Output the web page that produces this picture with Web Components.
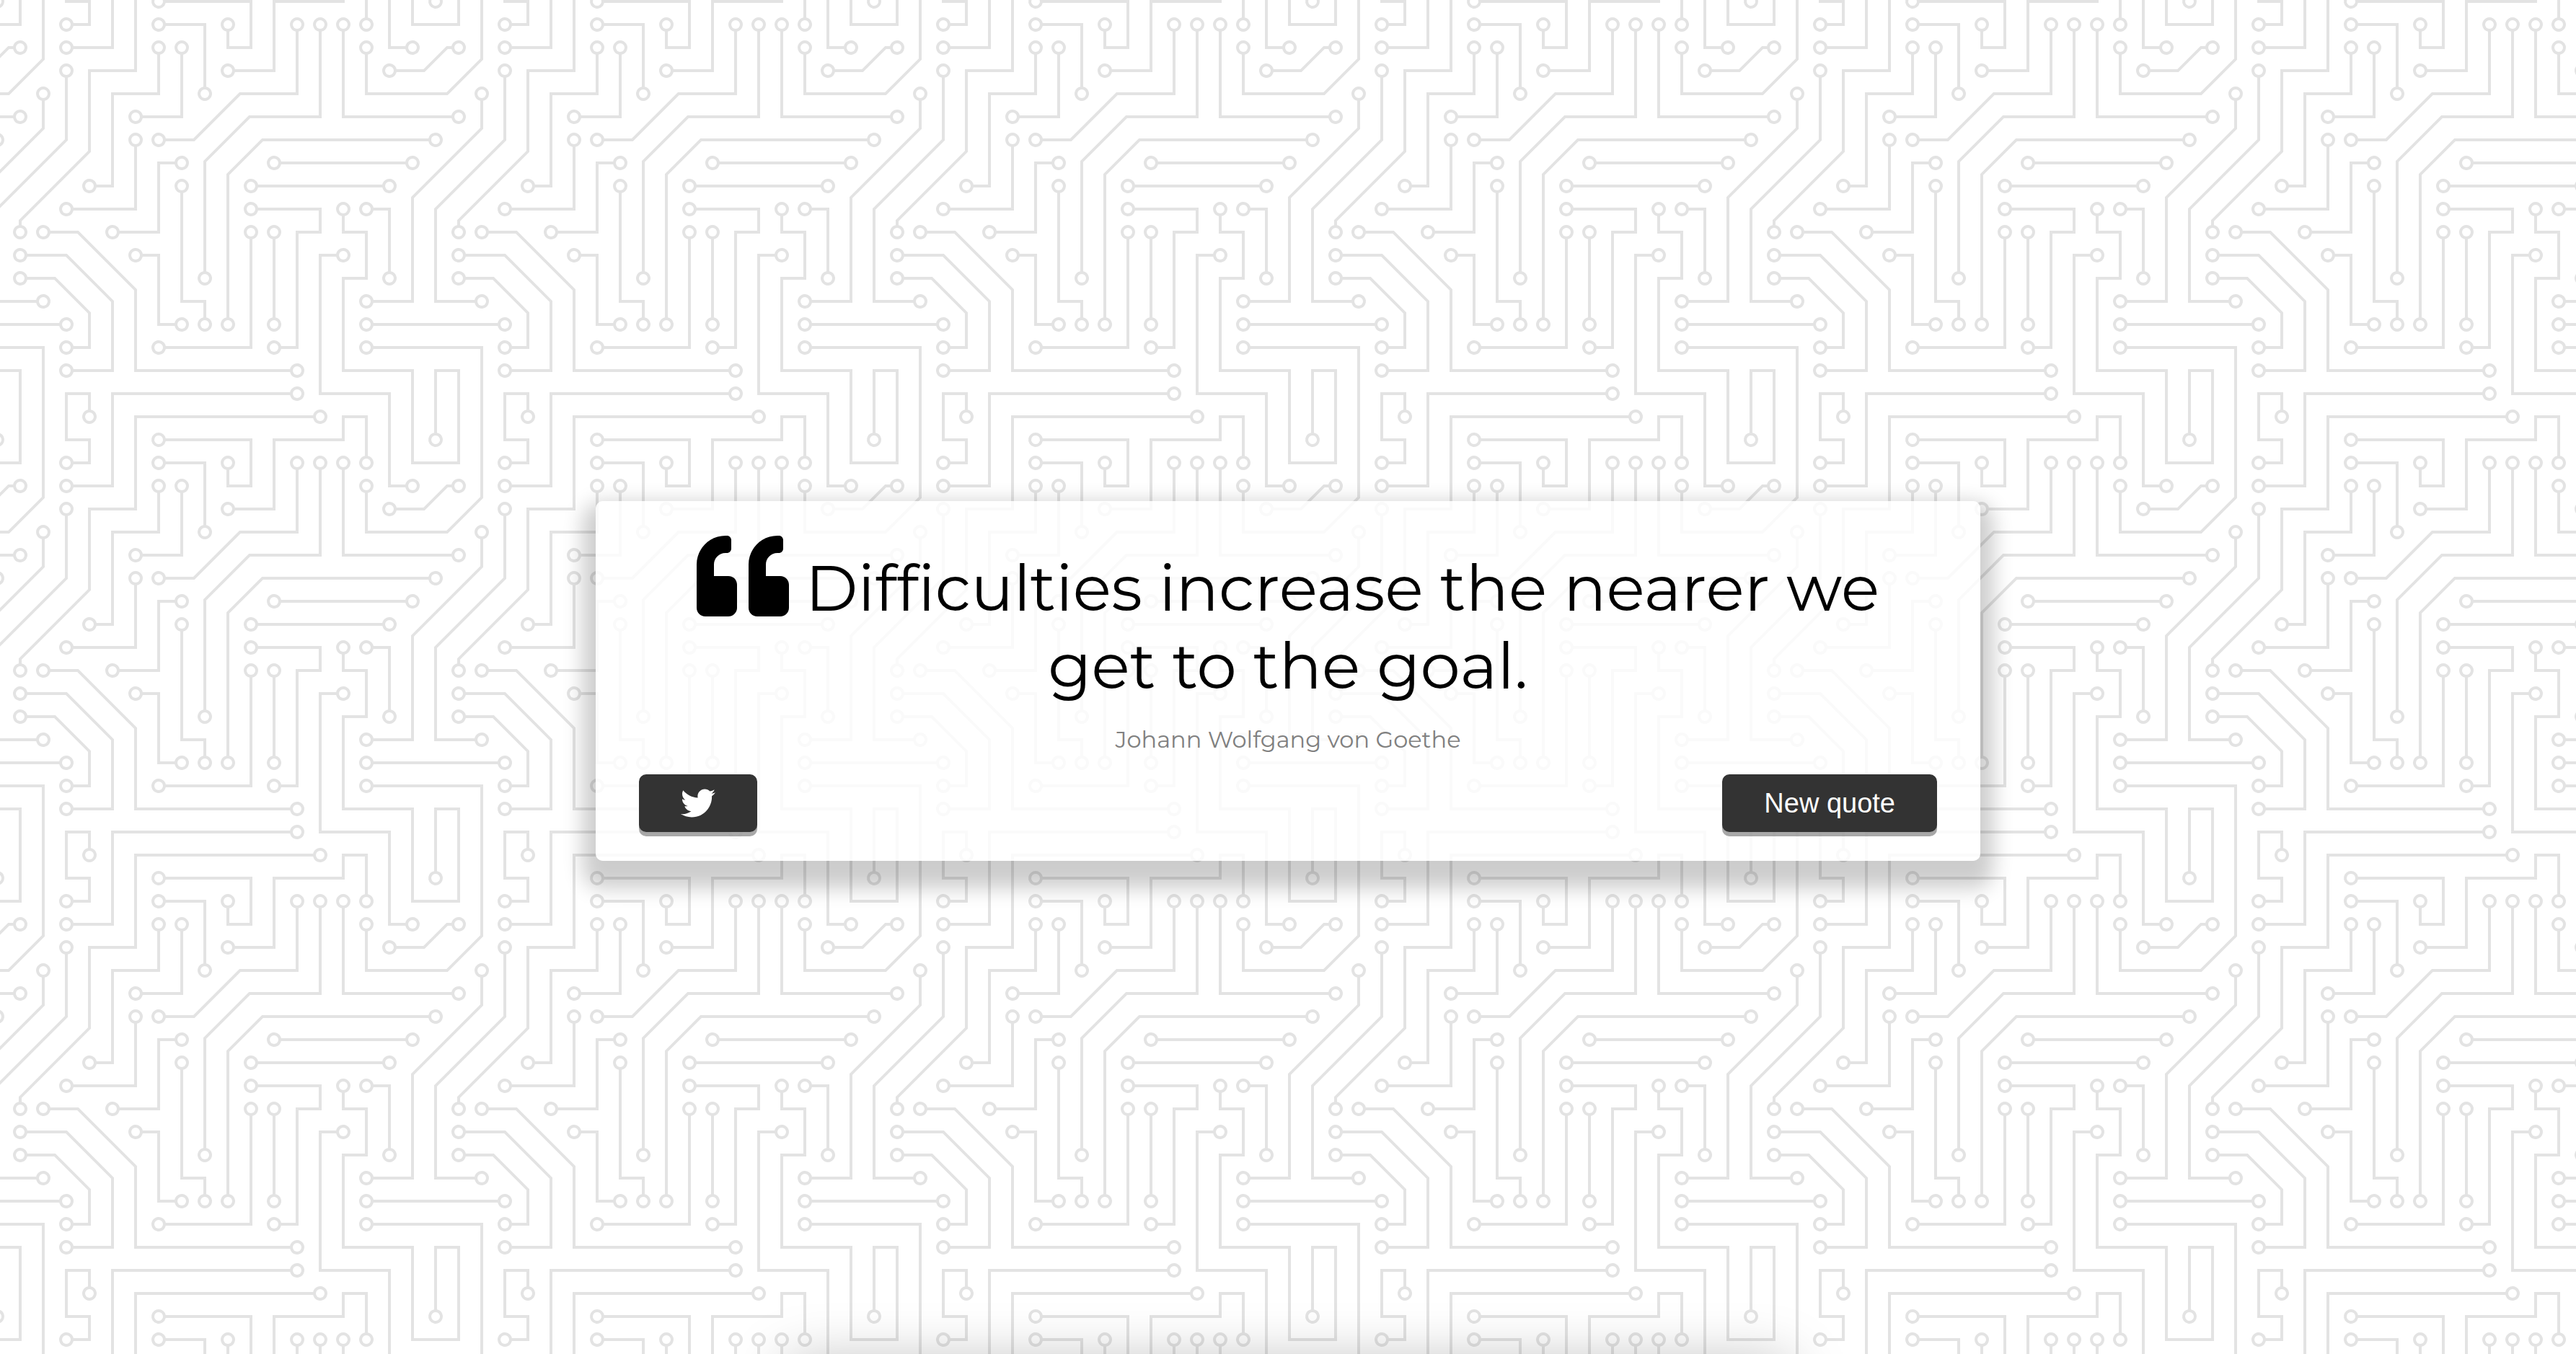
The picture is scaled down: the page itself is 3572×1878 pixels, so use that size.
<!DOCTYPE html>
<html lang="en">
<head>
<meta charset="utf-8">
<meta name="viewport" content="width=device-width, initial-scale=1">
<title>Random quote</title>
<style>
  body { margin: 0; background: #fff; font-family: Montserrat, Inter, sans-serif; }
</style>
</head>
<body>
<quote-page>
  <quote-card>
    <span slot="text">Difficulties increase the nearer we get to the goal.</span>
    <span slot="author">Johann Wolfgang von Goethe</span>
    <tweet-link slot="actions"></tweet-link>
    <action-button slot="actions">New quote</action-button>
  </quote-card>
</quote-page>

<script>
  class ShadowElement extends HTMLElement {
    constructor() {
      super();
      this.attachShadow({ mode: 'open' }).innerHTML = this.constructor.markup;
    }
  }

  // Tiled circuit board drawing that fills its box.
  class CircuitBackdrop extends ShadowElement {
    // Centres of the solder pads, whose middles are left open.
    static pads = [
      [49,225],[209,273],[257,225],[257,241],[273,129],[177,129],[17,81],[193,113],[289,113],[257,17],
      [193,225],[193,161],[241,17],[257,33],[145,225],[129,129],[129,113],[81,161],[113,241],[177,161],
      [97,177],[129,225],[65,289],[241,177],[257,145],[273,193],[193,241],[177,145],[289,33],[49,145],
      [97,97],[49,33],[65,129],[113,33],[97,81],[129,33],[113,17],[145,65],[225,289],[241,145],[49,17],
      [161,49],[161,17],[113,97],[209,17],[145,193],[225,17],[161,225],[17,161],[33,209],[49,49],[33,65],
      [17,33],[273,49],[257,209],[49,241],[17,193],[209,257],[33,161],[49,257],[17,177]
    ];
    static get markup() {
      return `
      <style>
        :host { display: block; overflow: hidden; }
        svg { display: block; width: 100%; height: 100%; }
      </style>
      <svg aria-hidden="true">
        <defs>
          <pattern id="board" x="-6" y="0" width="608" height="608" patternUnits="userSpaceOnUse" viewBox="0 0 304 304">
            <path fill="#e3e3e3" d="M44.1 224a5 5 0 1 1 0 2H0v-2h44.1zm160 48a5 5 0 1 1 0 2H82v-2h122.1zm57.8-46a5 5 0 1 1 0-2H304v2h-42.1zm0 16a5 5 0 1 1 0-2H304v2h-42.1zm6.2-114a5 5 0 1 1 0 2h-86.2a5 5 0 1 1 0-2h86.2zm-256-48a5 5 0 1 1 0 2H0v-2h12.1zm185.8 34a5 5 0 1 1 0-2h86.2a5 5 0 1 1 0 2h-86.2zM258 12.1a5 5 0 1 1-2 0V0h2v12.1zm-64 208a5 5 0 1 1-2 0v-54.2a5 5 0 1 1 2 0v54.2zm48-198.2V80h62v2h-64V21.9a5 5 0 1 1 2 0zm16 16V64h46v2h-48V37.9a5 5 0 1 1 2 0zm-128 96V208h16v12.1a5 5 0 1 1-2 0V210h-16v-76.1a5 5 0 1 1 2 0zm-5.9-21.9a5 5 0 1 1 0 2H114v48H85.9a5 5 0 1 1 0-2H112v-48h12.1zm-6.2 130a5 5 0 1 1 0-2H176v-74.1a5 5 0 1 1 2 0V242h-60.1zm-16-64a5 5 0 1 1 0-2H114v48h10.1a5 5 0 1 1 0 2H112v-48h-10.1zM66 284.1a5 5 0 1 1-2 0V274H50v30h-2v-32h18v12.1zM236.1 176a5 5 0 1 1 0 2H226v94h48v32h-2v-30h-48v-98h12.1zm25.8-30a5 5 0 1 1 0-2H274v44.1a5 5 0 1 1-2 0V146h-10.1zm-64 96a5 5 0 1 1 0-2H208v-80h16v-14h-42.1a5 5 0 1 1 0-2H226v18h-16v80h-12.1zm86.2-210a5 5 0 1 1 0 2H272V0h2v32h10.1zM98 101.9V146H53.9a5 5 0 1 1 0-2H96v-42.1a5 5 0 1 1 2 0zM53.9 34a5 5 0 1 1 0-2H80V0h2v34H53.9zm60.1 3.9V66H82v64H69.9a5 5 0 1 1 0-2H80V64h32V37.9a5 5 0 1 1 2 0zM101.9 82a5 5 0 1 1 0-2H128V37.9a5 5 0 1 1 2 0V82h-28.1zm16-64a5 5 0 1 1 0-2H146v44.1a5 5 0 1 1-2 0V18h-26.1zm102.2 270a5 5 0 1 1 0 2H98v14h-2v-16h124.1zM242 149.9V160h16v34h-16v62h48v48h-2v-46h-48v-66h16v-30h-16v-12.1a5 5 0 1 1 2 0zM53.9 18a5 5 0 1 1 0-2H64V2H48V0h18v18H53.9zm112 32a5 5 0 1 1 0-2H192V0h50v2h-48v48h-28.1zm-48-48a5 5 0 0 1-9.8-2h2.07a3 3 0 1 0 5.66 0H178v34h-18V21.9a5 5 0 1 1 2 0V32h14V2h-58.1zm0 96a5 5 0 1 1 0-2H137l32-32h39V21.9a5 5 0 1 1 2 0V66h-40.17l-32 32H117.9zm28.1 90.1a5 5 0 1 1-2 0v-76.51L175.59 80H224V21.9a5 5 0 1 1 2 0V82h-49.59L146 112.41v75.69zm16 32a5 5 0 1 1-2 0v-99.51L184.59 96H300.1a5 5 0 0 1 3.9-3.9v2.07a3 3 0 0 0 0 5.66v2.07a5 5 0 0 1-3.9-3.9H185.41L162 121.41v98.69zm-144-64a5 5 0 1 1-2 0v-3.51l48-48V48h32V0h2v50H66v55.41l-48 48v2.69zM50 53.9v43.51l-48 48V208h26.1a5 5 0 1 1 0 2H0v-65.41l48-48V53.9a5 5 0 1 1 2 0zm-16 16V89.41l-34 34v-2.82l32-32V69.9a5 5 0 1 1 2 0zM12.1 32a5 5 0 1 1 0 2H9.41L0 43.41V40.6L8.59 32h3.51zm265.8 18a5 5 0 1 1 0-2h18.69l7.41-7.41v2.82L297.41 50H277.9zm-16 160a5 5 0 1 1 0-2H288v-71.41l16-16v2.82l-14 14V210h-28.1zm-208 32a5 5 0 1 1 0-2H64v-22.59L40.59 194H21.9a5 5 0 1 1 0-2H41.41L66 216.59V242H53.9zm150.2 14a5 5 0 1 1 0 2H96v-56.6L56.6 162H37.9a5 5 0 1 1 0-2h19.5L98 200.6V256h106.1zm-150.2 2a5 5 0 1 1 0-2H80v-46.59L48.59 178H21.9a5 5 0 1 1 0-2H49.41L82 208.59V258H53.9zM34 39.8v1.61L9.41 66H0v-2h8.59L32 40.59V0h2v39.8zM2 300.1a5 5 0 0 1 3.9 3.9H3.83A3 3 0 0 0 0 302.17V256h18v48h-2v-46H2v42.1zM34 241v63h-2v-62H0v-2h34v1zM17 18H0v-2h16V0h2v18h-1zm273-2h14v2h-16V0h2v16zm-32 273v15h-2v-14h-14v14h-2v-16h18v1zM0 92.1A5.02 5.02 0 0 1 6 97a5 5 0 0 1-6 4.9v-2.07a3 3 0 1 0 0-5.66V92.1zM80 272h2v32h-2v-32zm37.9 32h-2.07a3 3 0 0 0-5.66 0h-2.07a5 5 0 0 1 9.8 0zM5.9 0A5.02 5.02 0 0 1 0 5.9V3.83A3 3 0 0 0 3.83 0H5.9zm294.2 0h2.07A3 3 0 0 0 304 3.83V5.9a5 5 0 0 1-3.9-5.9zm3.9 300.1v2.07a3 3 0 0 0-1.83 1.83h-2.07a5 5 0 0 1 3.9-3.9z"/>
            <g fill="#fff">${this.pads.map(([x, y]) => `<circle cx="${x}" cy="${y}" r="3"/>`).join('')}</g>
          </pattern>
        </defs>
        <rect width="100%" height="100%" fill="url(#board)"/>
      </svg>`;
    }
  }

  class QuotePage extends ShadowElement {
    static markup = `
      <style>
        :host { display: grid; position: relative; min-height: 100vh; overflow: hidden; }
        circuit-backdrop, main { grid-area: 1 / 1; }
        main { box-sizing: border-box; display: flex; align-items: center; justify-content: center;
          padding: 50px 40px 40px; position: relative; }
        .glow { position: absolute; top: 100%; left: 50%; width: 39%; height: 200px; margin-top: 12px;
          transform: translateX(-50%); box-shadow: 0 0 80px rgba(0, 0, 0, .27); }
      </style>
      <circuit-backdrop></circuit-backdrop>
      <main><slot></slot></main>
      <div class="glow"></div>`;
  }

  class QuoteMark extends ShadowElement {
    static markup = `
      <style>
        :host { display: inline-block; width: 128px; height: 128px; vertical-align: -16px; }
        svg { display: block; width: 100%; height: 100%; }
      </style>
      <svg viewBox="0 0 512 512" fill="currentColor" aria-hidden="true"><path d="M464 256h-80v-64c0-35.3 28.7-64 64-64h8c13.3 0 24-10.7 24-24V56c0-13.3-10.7-24-24-24h-8c-88.4 0-160 71.6-160 160v240c0 26.5 21.5 48 48 48h128c26.5 0 48-21.5 48-48V304c0-26.5-21.5-48-48-48zm-288 0H96v-64c0-35.3 28.7-64 64-64h8c13.3 0 24-10.7 24-24V56c0-13.3-10.7-24-24-24h-8C71.6 32 0 103.6 0 192v240c0 26.5 21.5 48 48 48h128c26.5 0 48-21.5 48-48V304c0-26.5-21.5-48-48-48z"/></svg>`;
  }

  class QuoteCard extends ShadowElement {
    static markup = `
      <style>
        :host { display: block; box-sizing: border-box; width: 100%; max-width: 1920px; padding: 40px 60px;
          border-radius: 10px; background: rgba(255, 255, 255, .8);
          box-shadow: 0 20px 28px 18px rgba(0, 0, 0, .2); text-align: center; }
        blockquote { margin: 0; padding: 0 60px; font-size: 88px; line-height: 108px; color: #000;
          font-variant-ligatures: none; }
        .author { margin: 28px 0; font-size: 32px; line-height: 40px; color: #808080; }
        .actions { display: flex; justify-content: space-between; }
      </style>
      <blockquote><quote-mark></quote-mark> <slot name="text"></slot></blockquote>
      <p class="author"><slot name="author"></slot></p>
      <div class="actions"><slot name="actions"></slot></div>`;
  }

  const buttonStyle = `
    :host { display: block; }
    a, button { box-sizing: border-box; display: flex; align-items: center; justify-content: center;
      height: 80px; margin: 0; padding: 0 58px; border: 0; border-radius: 10px; background: #333; color: #fff;
      font: 38px/44px "Liberation Sans", Arial, sans-serif; cursor: pointer;
      box-shadow: 0 6px 0 rgba(0, 0, 0, .34); }`;

  class TweetLink extends ShadowElement {
    static markup = `
      <style>${buttonStyle} svg { display: block; width: 48px; height: 48px; }</style>
      <a href="#tweet" aria-label="Tweet this quote">
        <svg viewBox="0 0 512 512" fill="currentColor" aria-hidden="true"><path d="M459.37 151.716c.325 4.548.325 9.097.325 13.645 0 138.72-105.583 298.558-298.558 298.558-59.452 0-114.68-17.219-161.137-47.106 8.447.974 16.568 1.299 25.34 1.299 49.055 0 94.213-16.568 130.274-44.832-46.132-.975-84.792-31.188-98.112-72.772 6.498.974 12.995 1.624 19.818 1.624 9.421 0 18.843-1.3 27.614-3.573-48.081-9.747-84.143-51.98-84.143-102.985v-1.299c13.969 7.797 30.214 12.67 47.431 13.319-28.264-18.843-46.781-51.005-46.781-87.391 0-19.492 5.197-37.36 14.294-52.954 51.655 63.675 129.3 105.258 216.365 109.807-1.624-7.797-2.599-15.918-2.599-24.04 0-57.828 46.782-104.934 104.934-104.934 30.213 0 57.502 12.67 76.67 33.137 23.715-4.548 46.456-13.32 66.599-25.34-7.798 24.366-24.366 44.833-46.132 57.827 21.117-2.273 41.584-8.122 60.426-16.243-14.292 20.791-32.161 39.308-52.628 54.253z"/></svg>
      </a>`;
  }

  class ActionButton extends ShadowElement {
    static markup = `<style>${buttonStyle}</style><button type="button"><slot></slot></button>`;
  }

  customElements.define('circuit-backdrop', CircuitBackdrop);
  customElements.define('quote-mark', QuoteMark);
  customElements.define('tweet-link', TweetLink);
  customElements.define('action-button', ActionButton);
  customElements.define('quote-card', QuoteCard);
  customElements.define('quote-page', QuotePage);
</script>
</body>
</html>
